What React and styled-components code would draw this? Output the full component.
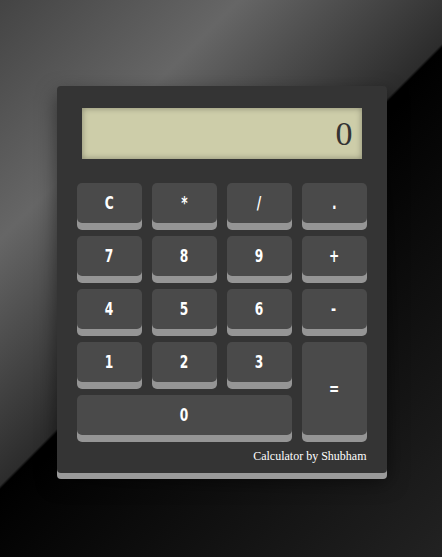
import React, { useState } from "react";
import styled, { createGlobalStyle } from "styled-components";

const GlobalStyle = createGlobalStyle`
  html, body {
    margin: 0;
    height: 100%;
  }
  body {
    background: linear-gradient(135deg, #444 0%, #666 24%, #2c2c2c 48.6%, #000 49%, #222 100%);
  }
  #root {
    height: 100%;
  }
`;

const Page = styled.div`
  height: 100%;
  padding: 86px 0 0 1px;
  box-sizing: border-box;
  display: flex;
  justify-content: center;
`;

const Body = styled.div`
  width: 330px;
  height: 387px;
  box-sizing: border-box;
  background: #343434;
  border-radius: 4px;
  padding: 22px 20px 0;
  box-shadow: 0 6px 0 #9a9a9a, 0 8px 20px rgba(0, 0, 0, 0.5);
  display: flex;
  flex-direction: column;
`;

const Screen = styled.div`
  margin: 0 5px;
  height: 51px;
  background: #cdcda9;
  box-shadow: inset 0 0 6px rgba(0, 0, 0, 0.35);
  display: flex;
  align-items: center;
  justify-content: flex-end;
  padding-right: 9px;
  font-family: "Liberation Serif", serif;
  font-size: 34px;
  color: #333;
`;

const Keys = styled.div`
  margin-top: 24px;
  display: grid;
  grid-template-columns: repeat(4, 65px);
  grid-auto-rows: 40px;
  column-gap: 10px;
  row-gap: 13px;
`;

const Key = styled.button`
  grid-column: span ${(p) => p.$cols || 1};
  grid-row: span ${(p) => p.$rows || 1};
  border: none;
  border-radius: 5px;
  background: #4a4a4a;
  box-shadow: 0 7px 0 #959595;
  color: #fff;
  font-family: "DejaVu Sans", sans-serif;
  font-weight: bold;
  font-size: 17px;
  padding: 0;
  cursor: pointer;
  &:active {
    transform: translateY(3px);
    box-shadow: 0 4px 0 #959595;
  }
`;

// the original face is a narrow one; squeeze the glyph to match
const Glyph = styled.span`
  display: inline-block;
  transform: scaleX(0.72);
`;

const Credit = styled.div`
  margin-top: 14px;
  text-align: right;
  font-family: "Liberation Serif", serif;
  font-size: 12px;
  color: #fff;
`;

const rows = [
  ["C", "*", "/", "."],
  ["7", "8", "9", "+"],
  ["4", "5", "6", "-"],
];

export default function App() {
  const [value, setValue] = useState("0");

  const press = (k) => {
    if (k === "C") return setValue("0");
    if (k === "=") {
      try {
        // eslint-disable-next-line no-new-func
        setValue(String(Function(`return (${value})`)()));
      } catch (e) {
        setValue("0");
      }
      return;
    }
    setValue((v) => (v === "0" && k !== "." ? k : v + k));
  };

  return (
    <Page>
      <GlobalStyle />
      <Body>
        <Screen>{value}</Screen>
        <Keys>
          {rows.flat().map((k) => (
            <Key key={k} onClick={() => press(k)}>
              <Glyph>{k}</Glyph>
            </Key>
          ))}
          <Key onClick={() => press("1")}><Glyph>1</Glyph></Key>
          <Key onClick={() => press("2")}><Glyph>2</Glyph></Key>
          <Key onClick={() => press("3")}><Glyph>3</Glyph></Key>
          <Key $rows={2} onClick={() => press("=")}><Glyph>=</Glyph></Key>
          <Key $cols={3} onClick={() => press("0")}><Glyph>0</Glyph></Key>
        </Keys>
        <Credit>Calculator by Shubham</Credit>
      </Body>
    </Page>
  );
}
